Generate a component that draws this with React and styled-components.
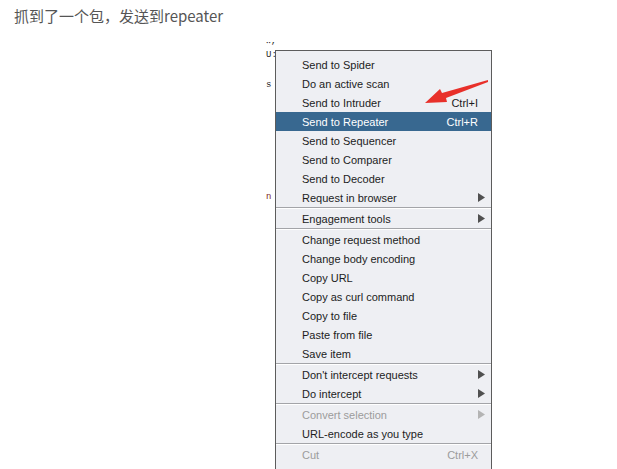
import React from 'react';
import styled, { createGlobalStyle } from 'styled-components';

const GlobalStyle = createGlobalStyle`
  html, body {
    margin: 0;
    padding: 0;
    background: #ffffff;
    overflow: hidden;
  }
  body {
    font-family: "Noto Sans CJK SC", "Liberation Sans", sans-serif;
  }
`;

const Page = styled.div`
  width: 617px;
  height: 469px;
  overflow: hidden;
  position: relative;
`;

const Caption = styled.p`
  margin: 0;
  padding: 5px 0 0 14px;
  font-size: 15px;
  line-height: 22px;
  color: #555555;
`;

const Shot = styled.div`
  position: relative;
  margin: 8px 0 0 266px;
  height: 440px;
`;

// only the slice of the request left of the popup is visible
const Code = styled.div`
  display: flex;
  flex-direction: column;
  font-family: "Liberation Mono", monospace;
  font-size: 9px;
  line-height: 12px;
  white-space: pre;
`;

const CodeLine = styled.div`
  margin-top: ${(p) => p.gap || 0}px;
  color: ${(p) => (p.red ? '#7a1f1f' : '#222222')};
`;

const Menu = styled.div`
  position: absolute;
  left: 9px;
  top: 15px;
  width: 215px;
  padding: 4px 0 40px;
  background: #eeeff3;
  border: 1px solid #5c5c5c;
  font-family: "Liberation Sans", Arial, sans-serif;
  font-size: 11px;
`;

const Item = styled.div`
  display: flex;
  align-items: center;
  height: 19px;
  padding-left: 26px;
  background: ${(p) => (p.active ? '#386890' : 'transparent')};
  color: ${(p) => (p.active ? '#ffffff' : p.disabled ? '#9c9c9c' : '#1c1c1c')};
`;

const Label = styled.span`
  flex: 1;
`;

const Shortcut = styled.span`
  margin-right: 13px;
`;

const Arrow = styled.svg`
  width: 7px;
  height: 9px;
  margin-right: 6px;
  fill: ${(p) => (p.disabled ? '#b4b4b4' : '#505050')};
`;

const Separator = styled.div`
  height: 1px;
  border-top: 1px solid #a3a4a8;
  background: #ffffff;
`;

const Pointer = styled.svg`
  position: absolute;
  left: 154px;
  top: 43px;
  width: 70px;
  height: 30px;
`;

const groups = [
  [
    { label: 'Send to Spider' },
    { label: 'Do an active scan' },
    { label: 'Send to Intruder', shortcut: 'Ctrl+I' },
    { label: 'Send to Repeater', shortcut: 'Ctrl+R', active: true },
    { label: 'Send to Sequencer' },
    { label: 'Send to Comparer' },
    { label: 'Send to Decoder' },
    { label: 'Request in browser', sub: true },
  ],
  [{ label: 'Engagement tools', sub: true }],
  [
    { label: 'Change request method' },
    { label: 'Change body encoding' },
    { label: 'Copy URL' },
    { label: 'Copy as curl command' },
    { label: 'Copy to file' },
    { label: 'Paste from file' },
    { label: 'Save item' },
  ],
  [
    { label: "Don't intercept requests", sub: true },
    { label: 'Do intercept', sub: true },
  ],
  [
    { label: 'Convert selection', sub: true, disabled: true },
    { label: 'URL-encode as you type' },
  ],
  [{ label: 'Cut', shortcut: 'Ctrl+X', disabled: true }],
];

const MenuItem = ({ label, shortcut, sub, active, disabled }) => (
  <Item active={active} disabled={disabled}>
    <Label>{label}</Label>
    {shortcut && <Shortcut>{shortcut}</Shortcut>}
    {sub && (
      <Arrow viewBox="0 0 7 9" disabled={disabled}>
        <polygon points="0,0 7,4.5 0,9" />
      </Arrow>
    )}
  </Item>
);

export default function App() {
  return (
    <Page>
      <GlobalStyle />
      <Caption>抓到了一个包，发送到repeater</Caption>
      <Shot>
        <Code>
          <CodeLine>{'\u2025,'}</CodeLine>
          <CodeLine gap={2}>U:</CodeLine>
          <CodeLine gap={18}>s</CodeLine>
          <CodeLine gap={100} red>n</CodeLine>
        </Code>
        <Menu>
          {groups.map((group, gi) => (
            <React.Fragment key={gi}>
              {gi > 0 && <Separator />}
              {group.map((it) => (
                <MenuItem key={it.label} {...it} />
              ))}
            </React.Fragment>
          ))}
        </Menu>
        <Pointer viewBox="0 0 70 30">
          <path
            d="M5 25 L20 11 L22 15 L68 2 L68 4 L26 20 L27 24 Z"
            fill="#e8302a"
          />
        </Pointer>
      </Shot>
    </Page>
  );
}
